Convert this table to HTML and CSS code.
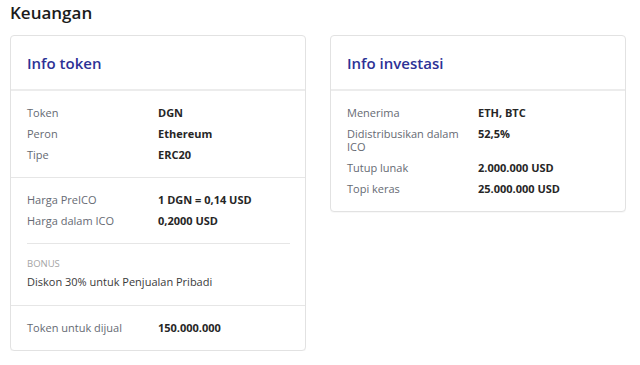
FILE: index.html
```html
<!DOCTYPE html>
<html lang="id">
<head>
<meta charset="utf-8">
<title>Keuangan</title>
<link rel="stylesheet" href="styles.css">
</head>
<body>
<main class="page">
  <h2 class="page-title">Keuangan</h2>
  <div class="cards">
    <section class="card">
      <header class="card-head"><h3>Info token</h3></header>
      <div class="card-section">
        <div class="row"><span class="label">Token</span><span class="value">DGN</span></div>
        <div class="row"><span class="label">Peron</span><span class="value">Ethereum</span></div>
        <div class="row"><span class="label">Tipe</span><span class="value">ERC20</span></div>
      </div>
      <div class="card-section card-section-bonus">
        <div class="row"><span class="label">Harga PreICO</span><span class="value">1 DGN = 0,14 USD</span></div>
        <div class="row"><span class="label">Harga dalam ICO</span><span class="value">0,2000 USD</span></div>
        <div class="bonus">
          <div class="bonus-title">Bonus</div>
          <div class="bonus-text">Diskon 30% untuk Penjualan Pribadi</div>
        </div>
      </div>
      <div class="card-section">
        <div class="row"><span class="label">Token untuk dijual</span><span class="value">150.000.000</span></div>
      </div>
    </section>
    <section class="card card-short">
      <header class="card-head"><h3>Info investasi</h3></header>
      <div class="card-section">
        <div class="row"><span class="label">Menerima</span><span class="value">ETH, BTC</span></div>
        <div class="row"><span class="label">Didistribusikan dalam ICO</span><span class="value">52,5%</span></div>
        <div class="row"><span class="label">Tutup lunak</span><span class="value">2.000.000 USD</span></div>
        <div class="row"><span class="label">Topi keras</span><span class="value">25.000.000 USD</span></div>
      </div>
    </section>
  </div>
</main>
</body>
</html>
```
FILE: styles.css
```css
* { box-sizing: border-box; }
html, body { margin: 0; padding: 0; background: #fff; }
body {
  font-family: "Open Sans", "Liberation Sans", sans-serif;
  color: #222;
}
.page { padding: 3px 14px 0 10px; }
.page-title {
  margin: 0 0 12px;
  font-size: 17px;
  line-height: 20px;
  font-weight: 600;
  color: #1b1b1b;
}
.cards {
  display: grid;
  grid-template-columns: 296px 296px;
  column-gap: 24px;
  align-items: start;
}
.card {
  border: 1px solid #e2e2e2;
  border-radius: 4px;
  background: #fff;
  box-shadow: 0 1px 1px rgba(0,0,0,0.03);
}
.card-head {
  height: 55px;
  padding: 0 16px;
  display: flex;
  align-items: center;
  border-bottom: 2px solid #ececec;
}
.card-head h3 {
  margin: 0;
  font-size: 15px;
  font-weight: 600;
  color: #2c3196;
  line-height: 20px;
}
.card-section {
  padding: 11px 16px 12px;
  border-bottom: 1px solid #e6e6e6;
}
.card-section:last-child { border-bottom: none; }
.card-section-bonus { padding-bottom: 15px; }
.row {
  display: grid;
  grid-template-columns: 131px 1fr;
  padding: 4px 0;
  font-size: 11px;
  line-height: 13px;
}
.label { color: #666a73; padding-right: 6px; }
.value { font-weight: 700; color: #262626; }
.bonus {
  margin-top: 12px;
  padding-top: 13px;
  border-top: 1px solid #e6e6e6;
  width: 263px;
}
.bonus-title {
  font-size: 9.5px;
  line-height: 14px;
  text-transform: uppercase;
  color: #a5a5a5;
}
.bonus-text {
  margin-top: 3px;
  font-size: 11px;
  line-height: 16px;
  color: #3a3a3a;
}
```
